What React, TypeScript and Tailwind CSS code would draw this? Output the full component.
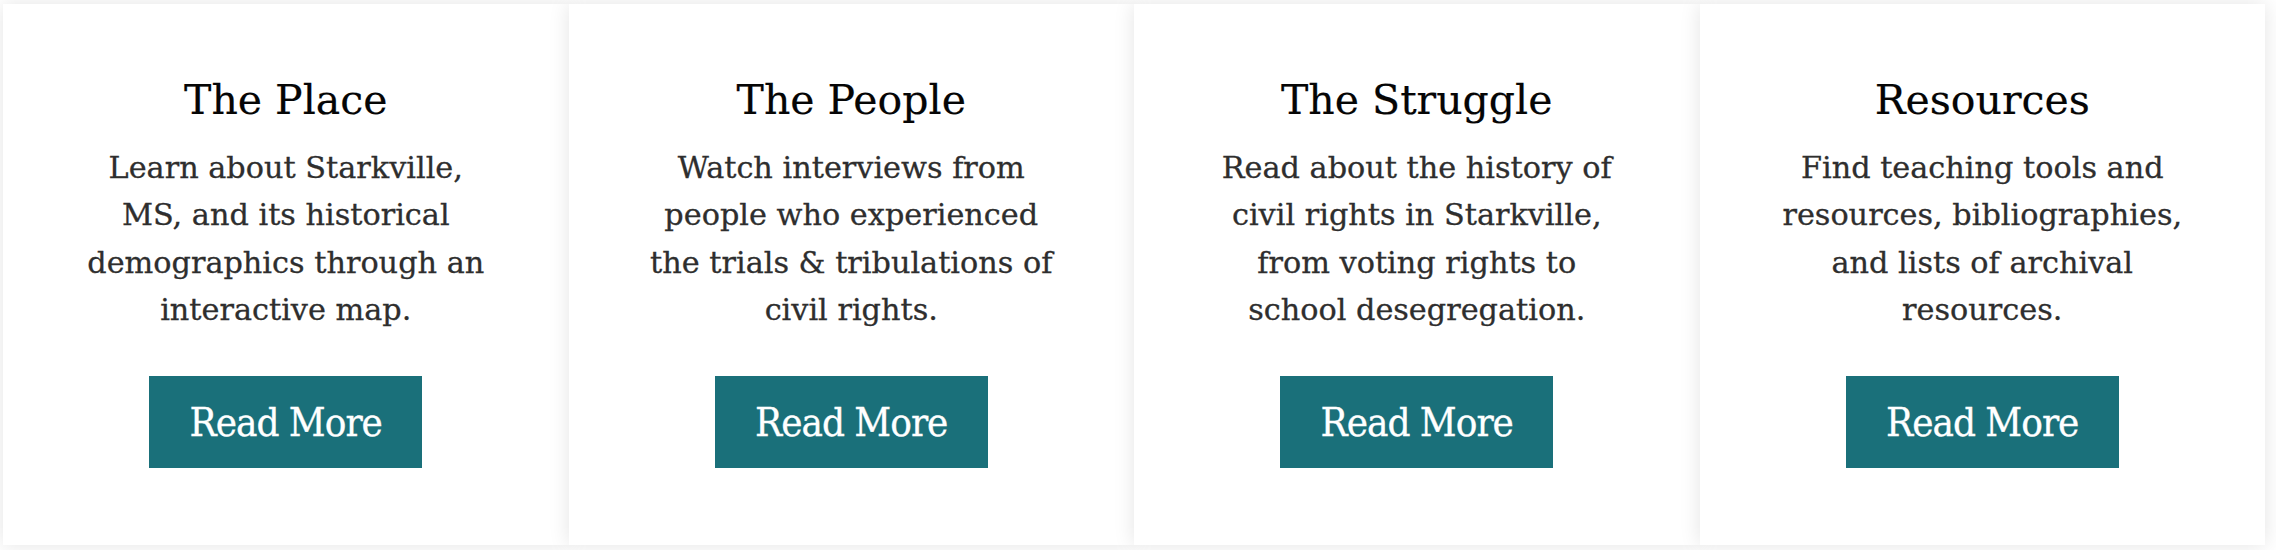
import React from "react";

const cards = [
  {
    title: "The Place",
    lines: ["Learn about Starkville,", "MS, and its historical", "demographics through an", "interactive map."],
  },
  {
    title: "The People",
    lines: ["Watch interviews from", "people who experienced", "the trials & tribulations of", "civil rights."],
  },
  {
    title: "The Struggle",
    lines: ["Read about the history of", "civil rights in Starkville,", "from voting rights to", "school desegregation."],
  },
  {
    title: "Resources",
    lines: ["Find teaching tools and", "resources, bibliographies,", "and lists of archival", "resources."],
  },
];

export default function App() {
  return (
    <div className="w-[2276px] h-[550px] bg-white overflow-hidden font-['DejaVu_Serif',serif]">
      <div className="flex pl-[3px] pt-[4px]">
        {cards.map((c) => (
          <div
            key={c.title}
            className="w-[565.5px] h-[541px] shrink-0 bg-white shadow-[0_0_20px_rgba(0,0,0,0.11)] flex flex-col items-center pt-[72px]"
          >
            <h2 className="text-[41px] leading-[49px] text-[#050505] font-normal whitespace-nowrap [-webkit-text-stroke:0.2px_#050505]">
              {c.title}
            </h2>
            <p className="mt-[19px] text-[30.3px] leading-[47.4px] text-[#2e2e2e] text-center [-webkit-text-stroke:0.3px_#2e2e2e]">
              {c.lines.map((l, i) => (
                <span key={i} className="block whitespace-nowrap">
                  {l}
                </span>
              ))}
            </p>
            <a
              href="#"
              className="mt-[42px] w-[273px] h-[92px] flex items-center justify-center bg-[#1a707a] text-white text-[40px] leading-none font-stretch-condensed tracking-[-1px] [-webkit-text-stroke:0.3px_#ffffff] font-['DejaVu_Serif_Condensed','DejaVu_Serif',serif]"
            >
              Read More
            </a>
          </div>
        ))}
      </div>
    </div>
  );
}
